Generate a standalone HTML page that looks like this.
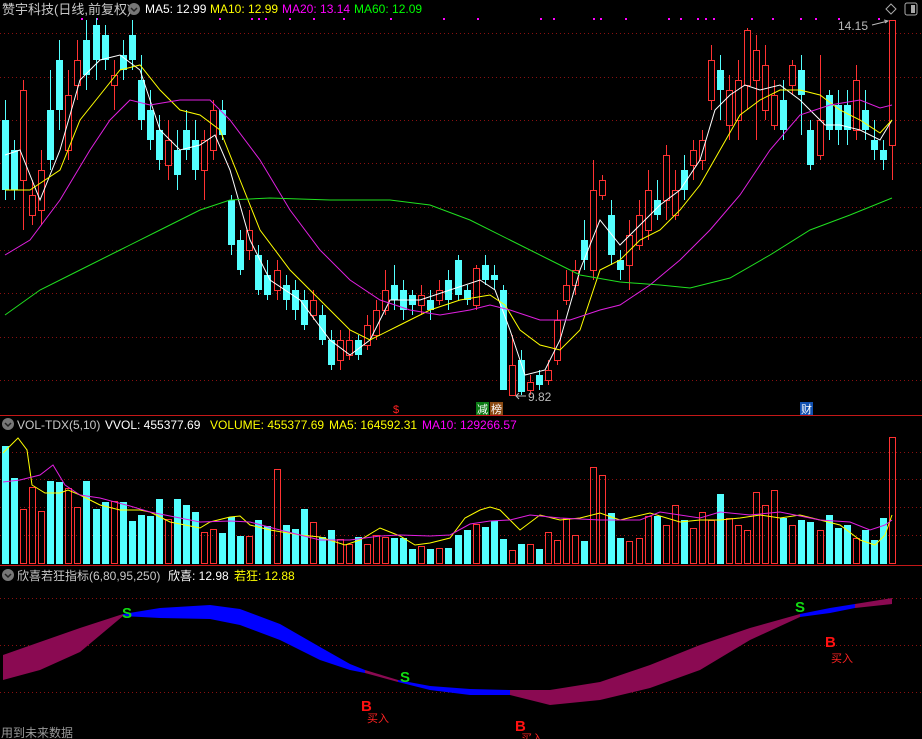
<!DOCTYPE html><html><head><meta charset="utf-8"><style>
body{margin:0;background:#000;width:922px;height:739px;overflow:hidden;font-family:"Liberation Sans","Noto Sans CJK SC",sans-serif}
svg{position:absolute;left:0;top:0}
.t{font-size:12px}
</style></head><body>
<svg id="s" width="922" height="739" xmlns="http://www.w3.org/2000/svg">
<rect width="922" height="739" fill="#000"/>
<g id="grid" stroke="#8a1010" stroke-dasharray="1,3" stroke-width="1"></g>
<line x1="0" y1="415.5" x2="922" y2="415.5" stroke="#c41818"/>
<line x1="0" y1="565.5" x2="922" y2="565.5" stroke="#c41818"/>
<g id="c"></g>
<g id="v"></g>
<g id="band"></g>
<g fill="none" stroke-width="1" id="ma"></g>
<g class="t">
<text x="2" y="14" fill="#c8c8c8" font-size="13">赞宇科技(日线,前复权)</text>
<circle cx="134" cy="9" r="6" fill="#777"/><path d="M131 8l3 3 3-3" stroke="#222" fill="none" stroke-width="1.5"/>
<text x="145" y="13" fill="#fff">MA5: 12.99</text>
<text x="210" y="13" fill="#ff0">MA10: 12.99</text>
<text x="282" y="13" fill="#f0f">MA20: 13.14</text>
<text x="354" y="13" fill="#0f0">MA60: 12.09</text>
<path d="M891 4l5 5-5 5-5-5z" stroke="#aaa" fill="none"/>
<rect x="905" y="3" width="12" height="12" rx="2" stroke="#aaa" fill="none"/><rect x="911" y="5" width="4" height="8" fill="#aaa"/>
<text x="838" y="30" fill="#bbb" font-size="12">14.15</text><path d="M872 25l16-4m-4-1l4 1-3 2" stroke="#bbb" fill="none"/>
<text x="528" y="401" fill="#bbb">9.82</text><path d="M526 396h-10m3-3l-3 3 3 3" stroke="#bbb" fill="none"/>
<text x="393" y="413" fill="#f22" font-size="11">$</text>
<rect x="476" y="402" width="13" height="13" fill="#0a7a14"/><text x="477" y="413" fill="#fff" font-size="11">减</text>
<rect x="490" y="402" width="13" height="13" fill="#8a4a12"/><text x="491" y="413" fill="#fff" font-size="11">榜</text>
<rect x="800" y="402" width="13" height="13" fill="#1050b0"/><text x="801" y="413" fill="#fff" font-size="11">财</text>
<circle cx="8" cy="424" r="6" fill="#777"/><path d="M5 423l3 3 3-3" stroke="#222" fill="none" stroke-width="1.5"/>
<text x="17" y="429" fill="#c8c8c8">VOL-TDX(5,10)</text>
<text x="105" y="429" fill="#fff">VVOL: 455377.69</text>
<text x="210" y="429" fill="#ff0">VOLUME: 455377.69</text>
<text x="329" y="429" fill="#ff0">MA5: 164592.31</text>
<text x="422" y="429" fill="#f0f">MA10: 129266.57</text>
<circle cx="8" cy="575" r="6" fill="#777"/><path d="M5 574l3 3 3-3" stroke="#222" fill="none" stroke-width="1.5"/>
<text x="17" y="580" fill="#c8c8c8">欣喜若狂指标(6,80,95,250)</text>
<text x="168" y="580" fill="#fff">欣喜: 12.98</text>
<text x="234" y="580" fill="#ff0">若狂: 12.88</text>
<text x="122" y="618" fill="#1d1" font-size="15" font-weight="bold">S</text>
<text x="400" y="682" fill="#1d1" font-size="15" font-weight="bold">S</text>
<text x="795" y="612" fill="#1d1" font-size="15" font-weight="bold">S</text>
<text x="361" y="711" fill="#f11" font-size="15" font-weight="bold">B</text>
<text x="367" y="722" fill="#f22" font-size="11">买入</text>
<text x="515" y="731" fill="#f11" font-size="15" font-weight="bold">B</text>
<text x="521" y="742" fill="#f22" font-size="11">买入</text>
<text x="825" y="647" fill="#f11" font-size="15" font-weight="bold">B</text>
<text x="831" y="662" fill="#f22" font-size="11">买入</text>
<text x="1" y="737" fill="#999" font-size="12">用到未来数据</text>
</g>
</svg>
<script>
var N='http://www.w3.org/2000/svg';
function el(p,t,a){var e=document.createElementNS(N,t);for(var k in a)e.setAttribute(k,a[k]);p.appendChild(e);return e;}
var G=document.getElementById('grid');
[33,77,120,163,207,250,293,337,380,452,479,507,535,598,645,692].forEach(function(y){el(G,'line',{x1:0,x2:922,y1:y+.5,y2:y+.5});});
[81,96,219,251,258,265,289,313,343,390,443,477,540,553,593,600,625,668,680,697,705,713,751,772,800,815,838,878].forEach(function(x){el(G,'rect',{x:x,y:18,width:2,height:2,fill:'#f0f',stroke:'none'});});
var C=[['c',120,190,100,200],['c',150,190,140,200],['r',90,180,80,230],['r',195,215,180,225],['r',170,210,150,225],['c',110,160,70,170],['c',60,110,40,130],['r',95,150,70,160],['r',60,85,40,100],['c',40,75,20,90],['c',25,60,18,80],['c',35,60,25,70],['r',75,85,60,110],['c',55,70,40,80],['c',35,60,20,70],['c',80,120,55,130],['c',110,140,90,150],['c',130,160,115,170],['r',140,165,120,180],['c',150,175,130,190],['c',130,150,110,160],['c',140,170,120,180],['r',140,170,130,200],['r',110,150,100,160],['c',110,135,100,140],['c',200,245,195,255],['c',240,270,230,275],['r',230,250,210,260],['c',255,290,245,295],['c',275,295,260,300],['r',270,290,260,300],['c',285,300,275,310],['c',290,310,280,320],['c',300,325,290,330],['r',300,315,290,320],['c',315,340,305,345],['c',340,365,330,370],['r',340,360,330,370],['r',340,355,330,360],['c',340,355,335,360],['r',325,345,315,350],['r',310,335,300,340],['r',290,310,270,315],['c',285,300,265,310],['c',290,310,280,320],['c',295,305,290,315],['r',295,305,285,315],['c',300,310,290,320],['r',290,300,280,305],['c',280,300,270,310],['c',260,295,255,300],['c',290,300,285,305],['r',268,305,265,310],['c',265,280,255,285],['c',275,280,265,290],['c',290,390,285,390],['r',365,395,335,395],['c',360,392,350,395],['r',382,390,375,395],['c',375,385,370,390],['r',370,380,360,385],['r',320,360,310,365],['r',285,300,270,305],['r',270,285,260,295],['c',240,260,220,270],['r',190,270,160,280],['r',180,195,175,200],['c',215,255,200,265],['c',260,270,250,280],['r',235,265,220,290],['r',215,245,200,250],['r',190,230,170,240],['c',200,215,180,220],['r',155,200,145,220],['r',190,215,170,220],['c',170,190,155,200],['r',150,165,140,180],['r',140,160,130,170],['r',60,100,45,110],['c',70,90,55,120],['r',90,125,75,140],['r',80,120,60,140],['r',30,85,28,110],['r',50,80,35,140],['r',65,110,45,120],['r',95,125,80,130],['c',100,130,80,140],['r',65,85,60,95],['c',70,95,55,135],['c',130,165,120,170],['r',120,155,55,160],['c',95,130,90,140],['c',105,130,90,145],['c',105,130,90,145],['r',80,130,65,140],['c',110,130,90,140],['c',140,150,120,160],['c',150,160,140,170],['r',20,145,20,180]];
var V=[446,478,509,487,511,481,482,488,507,481,509,502,501,502,521,515,516,499,519,499,505,512,532,529,533,517,536,536,520,526,469,525,529,509,522,537,530,539,544,537,544,535,537,538,538,549,546,549,548,548,535,530,524,527,521,539,550,544,544,549,532,540,518,535,541,467,475,513,538,541,538,516,516,525,505,520,528,512,520,494,518,525,530,492,505,490,518,525,520,522,530,515,528,525,538,530,540,518,437];
var cg=document.getElementById('c'),vg=document.getElementById('v');
C.forEach(function(d,i){var x=Math.round(5+i*9.05),col=d[0]=='r'?'#ff3232':'#54ffff';
el(cg,'line',{x1:x+.5,x2:x+.5,y1:d[3],y2:d[4],stroke:col});
if(d[0]=='r')el(cg,'rect',{x:x-3+.5,y:d[1]+.5,width:6,height:Math.max(1,d[2]-d[1]),fill:'#000',stroke:col});
else el(cg,'rect',{x:x-3,y:d[1],width:7,height:Math.max(1,d[2]-d[1]),fill:col});
var vt=V[i]||530;
if(d[0]=='r')el(vg,'rect',{x:x-3+.5,y:vt+.5,width:6,height:563-vt,fill:'none',stroke:col});
else el(vg,'rect',{x:x-3,y:vt,width:7,height:564-vt,fill:col});});
var M=document.getElementById('ma');
function pl(s,c){el(M,'polyline',{points:s,stroke:c});}
pl('5,155 20,150 40,200 60,150 80,80 100,60 120,55 140,70 160,130 180,150 200,145 215,135 230,170 250,240 270,280 300,300 330,340 350,355 370,340 390,300 420,300 450,290 480,280 495,290 510,330 525,375 545,370 560,340 580,270 600,220 620,245 640,225 660,205 680,190 700,160 715,110 730,95 745,85 760,90 780,85 800,100 810,110 825,125 840,125 860,130 880,140 892,120','#fff');
pl('5,190 30,190 60,170 80,120 100,95 120,70 140,65 160,90 180,110 200,115 220,130 240,180 260,230 290,270 320,300 350,330 370,340 400,325 430,310 460,300 490,295 505,305 520,330 540,345 560,350 580,330 600,270 620,260 640,240 660,230 680,210 700,185 720,150 740,115 760,100 780,90 800,90 820,95 840,110 860,120 880,133 892,120','#ff0');
pl('5,255 30,240 60,200 90,150 110,120 130,100 150,105 180,100 210,100 230,120 260,160 290,210 320,250 350,280 380,300 410,310 440,315 470,310 490,305 510,310 540,320 570,320 600,310 620,305 650,285 680,260 710,230 740,195 770,150 800,115 830,105 860,100 880,108 892,105','#e020e0');
pl('5,315 40,290 80,270 120,250 160,230 200,210 230,200 270,198 330,200 390,200 430,205 470,220 510,240 550,260 580,275 620,282 660,285 690,288 730,278 770,255 810,230 850,215 892,198','#20e020');
pl('3,453 18,438 27,450 32,485 45,493 60,493 68,490 80,495 100,505 120,510 140,510 150,512 170,522 200,528 210,522 230,517 240,516 250,525 270,530 300,535 320,537 345,545 360,540 380,528 400,536 415,545 430,543 450,538 465,518 480,510 490,507 500,510 520,530 540,515 560,520 580,518 600,513 620,520 650,513 680,522 700,520 720,520 740,518 760,515 780,518 800,515 820,520 840,525 860,540 875,545 885,535 892,515','#ff0');
pl('3,482 20,480 40,475 53,465 65,485 80,495 100,498 130,506 150,512 170,516 200,522 230,521 250,522 280,530 300,535 320,540 350,540 380,536 400,535 430,536 450,535 470,524 490,521 510,520 530,515 560,518 600,520 640,520 660,512 700,518 720,512 750,515 780,512 820,520 850,522 870,530 885,525 892,520','#e020e0');
var B=document.getElementById('band');
function poly(top,bot,c){el(B,'polygon',{points:top+' '+bot.split(' ').reverse().join(' '),fill:c});}
poly('3,655 40,642 80,628 123,614','3,680 40,670 80,652 123,616','#8a0a52');
poly('123,614 160,608 210,605 240,609 280,624 320,647 350,664 365,670','123,616 160,618 210,619 240,625 280,640 320,660 350,670 365,673','#0000ff');
poly('365,670 398,680','365,673 398,682','#8a0a52');
poly('398,680 430,686 470,689 510,690','398,682 430,690 470,695 510,695','#0000ff');
poly('510,690 550,690 600,682 650,665 700,645 750,628 800,614','510,695 550,705 600,700 650,688 700,670 750,640 800,617','#8a0a52');
poly('800,614 830,608 855,604','800,617 830,613 855,608','#0000ff');
poly('855,604 892,598','855,608 892,604','#8a0a52');
</script>
</body></html>
